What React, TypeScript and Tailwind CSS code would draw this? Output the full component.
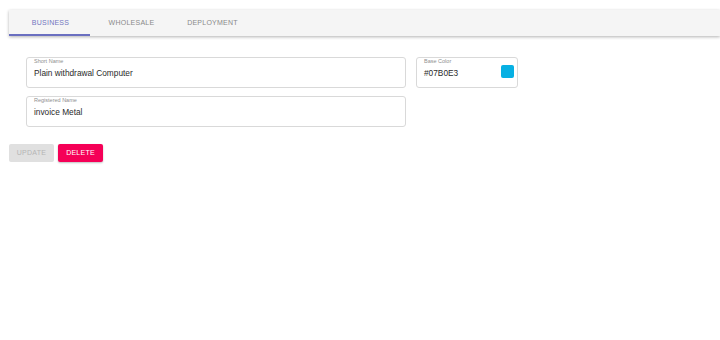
import { useState } from 'react'

const tabs = ['BUSINESS', 'WHOLESALE', 'DEPLOYMENT']

function Field({ label, value, className }: { label: string; value: string; className?: string }) {
  return (
    <div className={`relative h-[31px] rounded-[3px] border border-[#d9d9d9] bg-white ${className ?? ''}`}>
      <span className="absolute left-[7px] top-[1px] text-[5.5px] leading-none text-[#8f8f8f]">{label}</span>
      <div className="pl-[7px] pt-[10px] text-[8.3px] leading-[10px] text-[#2a2a2a]">{value}</div>
    </div>
  )
}

export default function App() {
  const [active, setActive] = useState(0)

  return (
    <div className="h-[340px] w-[720px] bg-white font-['Liberation_Sans',Arial,sans-serif]">
      <div className="pl-[9px] pt-[10px]">
        <div className="flex h-[26px] bg-[#f5f5f5] shadow-[0_1px_3px_rgba(0,0,0,0.3)]">
          {tabs.map((tab, i) => (
            <button
              key={tab}
              onClick={() => setActive(i)}
              className={`relative w-[81px] pl-[2px] text-[7px] font-normal tracking-[0.25px] ${
                i === active ? 'text-[#7276bf]' : 'text-[#8a8a8a]'
              }`}
            >
              {tab}
              {i === active && (
                <span className="absolute bottom-0 left-0 h-[2px] w-full bg-[#6a6fc0]" />
              )}
            </button>
          ))}
        </div>
      </div>

      <div className="flex gap-[10px] pl-[26px] pt-[21px]">
        <div className="flex w-[380px] flex-col gap-[8px]">
          <Field label="Short Name" value="Plain withdrawal Computer" />
          <Field label="Registered Name" value="invoice Metal" />
        </div>
        <div className="relative h-[31px] w-[102px] rounded-[3px] border border-[#d9d9d9] bg-white">
          <span className="absolute left-[7px] top-[1px] text-[5.5px] leading-none text-[#8f8f8f]">Base Color</span>
          <div className="pl-[7px] pt-[10px] text-[8.3px] leading-[10px] text-[#2a2a2a]">#07B0E3</div>
          <span className="absolute right-[3px] top-[7px] h-[13px] w-[13px] rounded-[2px] bg-[#07B0E3]" />
        </div>
      </div>

      <div className="flex gap-[4px] pl-[9px] pt-[17px]">
        <button className="h-[18px] w-[45px] rounded-[2px] bg-[#e0e0e0] text-[7px] font-normal tracking-[0.25px] text-[#b5b5b5]">
          UPDATE
        </button>
        <button className="h-[18px] w-[45px] rounded-[2px] bg-[#f50057] text-[7px] font-normal tracking-[0.25px] text-white shadow-[0_1px_2px_rgba(0,0,0,0.25)]">
          DELETE
        </button>
      </div>
    </div>
  )
}
